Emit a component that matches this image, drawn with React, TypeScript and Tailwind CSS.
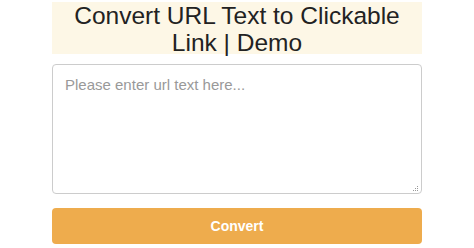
export default function App() {
  return (
    <div
      className="w-[474px] h-[248px] bg-white overflow-hidden"
      style={{ fontFamily: '"Liberation Sans", Arial, sans-serif' }}
    >
      <div className="mx-[52px] pt-[2px]">
        <h1 className="h-[52px] bg-[#fdf7e6] px-[4px] text-center text-[24.5px] leading-[27px] font-normal text-[#222]">
          Convert URL Text to Clickable Link | Demo
        </h1>
        <div className="relative mt-[10px]">
          <textarea
            className="block h-[130px] w-full resize-none rounded-[4px] border border-[#ccc] px-[12px] py-[9px] text-[15px] text-[#555] outline-none placeholder:text-[#999]"
            placeholder="Please enter url text here..."
          />
          {/* resize grip */}
          <div className="pointer-events-none absolute bottom-[3px] right-[4px] grid grid-cols-3 gap-[1px]">
            <span className="h-[1px] w-[1px]" />
            <span className="h-[1px] w-[1px]" />
            <span className="h-[1px] w-[1px] bg-[#999]" />
            <span className="h-[1px] w-[1px]" />
            <span className="h-[1px] w-[1px] bg-[#999]" />
            <span className="h-[1px] w-[1px] bg-[#999]" />
            <span className="h-[1px] w-[1px] bg-[#999]" />
            <span className="h-[1px] w-[1px] bg-[#999]" />
            <span className="h-[1px] w-[1px] bg-[#999]" />
          </div>
        </div>
        <button className="mt-[14px] block h-[36px] w-full rounded-[4px] bg-[#eeac4d] text-[14px] font-bold text-white">
          Convert
        </button>
      </div>
    </div>
  );
}
